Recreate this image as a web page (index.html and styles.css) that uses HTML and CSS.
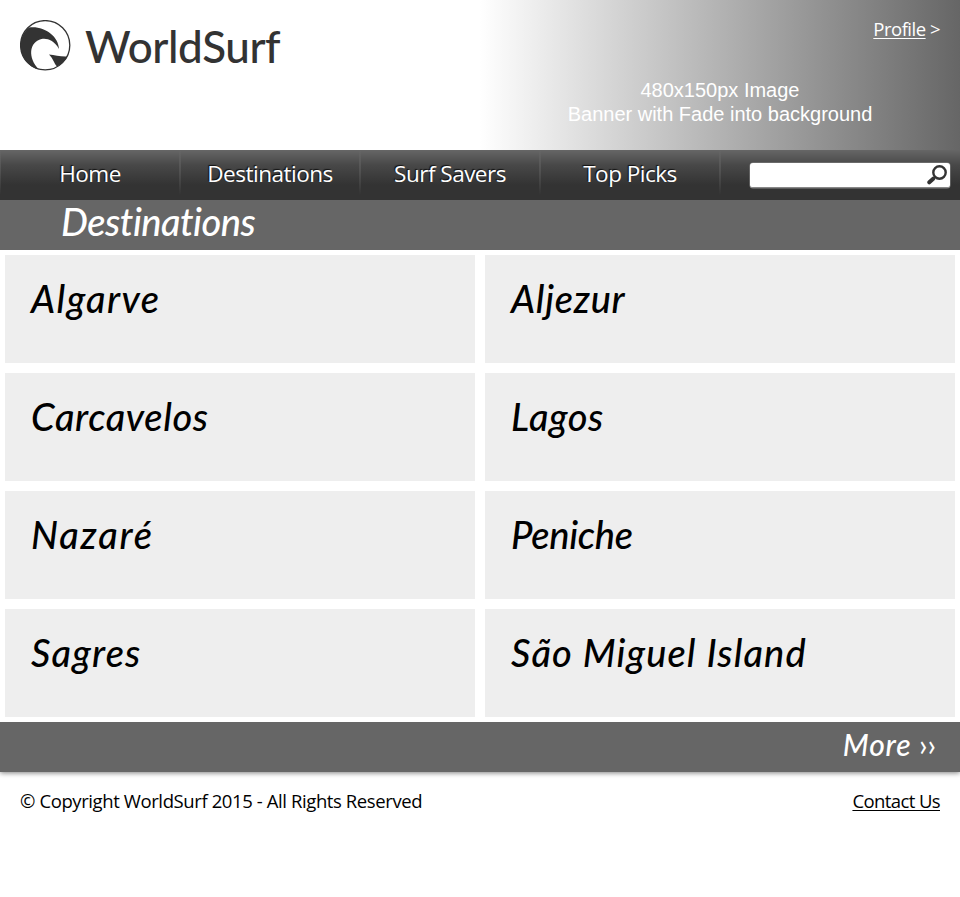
FILE: index.html
```html
<!DOCTYPE html>
<html lang="en">
<head>
<meta charset="utf-8">
<title>WorldSurf</title>
<link rel="stylesheet" href="styles.css">
</head>
<body>
<header class="header">
  <a class="logo">
    <svg class="mark" viewBox="0 0 52 52" width="52" height="52">
      <circle cx="25.2" cy="25.2" r="24.6" fill="none" stroke="#333" stroke-width="1.3"/>
      <path d="M9 7.500C24 5.500 38.500 16 39 29C34 20 27 18 21.500 19C9 22 7.500 38 19 49.500C9 47.500 .5 38 .5 25C.5 18 4 11.500 9 7.500Z" fill="#333"/>
      <path d="M29 34.500C35 35 41 37 47.500 36.500C45 41 41 44.500 37 46.500C34 43.500 33.500 39 29 34.500Z" fill="#333"/>
    </svg>
    <span class="name">WorldSurf</span>
  </a>
  <div class="banner">
    <p class="profile"><a>Profile</a> &gt;</p>
    <p class="caption">480x150px Image<br>Banner with Fade into background</p>
  </div>
</header>
<nav class="nav">
  <a class="tab">Home</a>
  <a class="tab">Destinations</a>
  <a class="tab">Surf Savers</a>
  <a class="tab">Top Picks</a>
  <form class="search">
    <div class="field">
      <svg viewBox="0 0 22 22" width="22" height="22">
        <circle cx="12.500" cy="8.500" r="6.200" fill="none" stroke="#333" stroke-width="2.400"/>
        <path d="M8.200 12.800L7 14" stroke="#333" stroke-width="2"/>
        <path d="M6.200 14.700L2.300 18.300" stroke="#333" stroke-width="4" stroke-linecap="round"/>
      </svg>
    </div>
  </form>
</nav>
<main>
  <h1 class="title">Destinations</h1>
  <div class="grid">
    <a class="card algarve">Algarve</a>
    <a class="card aljezur">Aljezur</a>
    <a class="card carcavelos">Carcavelos</a>
    <a class="card lagos">Lagos</a>
    <a class="card nazare">Nazaré</a>
    <a class="card peniche">Peniche</a>
    <a class="card sagres">Sagres</a>
    <a class="card sao-miguel">São Miguel Island</a>
  </div>
  <div class="more"><a>More <span>››</span></a></div>
</main>
<footer class="footer">
  <span class="copy">© Copyright WorldSurf 2015 - All Rights Reserved</span>
  <a class="contact">Contact Us</a>
</footer>
</body>
</html>
```
FILE: styles.css
```css
* { box-sizing: border-box; }
body { margin: 0; background: #fff; color: #000; font-family: "Open Sans", "Noto Sans", sans-serif; font-variant-ligatures: none; }
p, h1 { margin: 0; }

.header { display: flex; height: 150px; }
.logo { display: flex; width: 480px; padding: 20px; color: #333; }
.mark { flex: none; }
.name { margin-left: 13px; font: 500 44px/53px Lato, sans-serif; letter-spacing: -.45px; font-variant-ligatures: none; }
.banner { width: 480px; padding: 16px 20px 0; color: #fff; background: linear-gradient(90deg, #fff, #666); }
.profile { font-size: 18.5px; line-height: 26px; text-align: right; letter-spacing: -.5px; }
.profile a, .contact { text-decoration: underline; text-decoration-thickness: 1px; text-underline-offset: 2px; }
.caption { margin-top: 36px; font: 20px/24px "Liberation Sans", sans-serif; text-align: center; }

.nav { display: flex; height: 50px; background: linear-gradient(#666, #484848 30%, #333 70%, #333); }
.tab, .search { background: linear-gradient(#666, #505050 50%, #333) 0 0 / 1px 45px no-repeat; }
.tab { width: 180px; color: #fff; font-size: 22.5px; line-height: 47px; letter-spacing: -.5px; text-align: center; text-shadow: -1px -1px 1px #111;
  background:
    linear-gradient(#666, #505050 50%, #333) 0 0 / 1px 45px no-repeat,
    linear-gradient(#666, #505050 50%, #333) 100% 0 / 1px 45px no-repeat; }
.search { width: 240px; padding: 13px 0 0 30px; margin: 0; }
.field { display: flex; justify-content: flex-end; width: 200px; height: 25px; background: #fff; border-radius: 3px; border-bottom: 1px solid #888; padding: 1px 1px 0 0; box-shadow: 0 0 0 .5px #888; }

.title { height: 50px; padding-left: 61px; background: #666; color: #fff; font: italic 500 38px/42px Lato, sans-serif; letter-spacing: -.5px; font-variant-ligatures: none; }
.grid { display: grid; grid-template-columns: 1fr 1fr; gap: 10px; padding: 5px; }
.card { height: 108px; padding: 20px 0 0 26px; background: #eee; font: italic 500 38px/46px Lato, sans-serif; }
.algarve { letter-spacing: 1.4px; }
.aljezur { letter-spacing: .7px; }
.carcavelos { letter-spacing: .6px; }
.lagos { letter-spacing: .5px; }
.nazare { letter-spacing: 1.8px; }
.peniche { letter-spacing: -.3px; }
.sagres { letter-spacing: 1.2px; }
.sao-miguel { letter-spacing: 1.1px; }
.more { height: 50px; padding-right: 24px; background: #666; color: #fff; text-align: right; font: italic 500 30px/44px Lato, sans-serif; letter-spacing: .8px; box-shadow: 0 1px 5px rgba(0,0,0,.5); clip-path: inset(0 0 -10px 0); }
.more span { font-style: normal; font-weight: 400; letter-spacing: 0; }
.footer { display: flex; justify-content: space-between; padding: 15px 20px; font-size: 18.5px; line-height: 27px; letter-spacing: -.4px; }
.contact { letter-spacing: -.6px; }
```
